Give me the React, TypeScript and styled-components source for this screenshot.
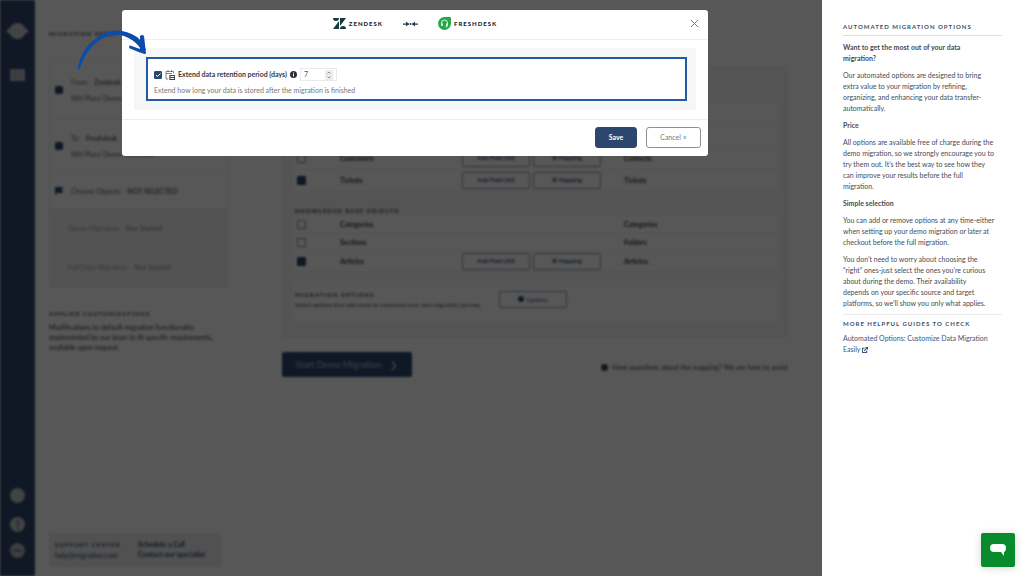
import React from 'react';
import styled, { createGlobalStyle } from 'styled-components';

const GlobalStyle = createGlobalStyle`
  *, *::before, *::after { box-sizing: border-box; }
  body { margin: 0; background: #fff; color: #454c55; font: 7px/11px Lato, "Liberation Sans", sans-serif; }
  h1, h2, h3, p { margin: 0; }
  button, input { font: inherit; }
`;

const Page = styled.div`
  display: grid;
  grid-template-columns: minmax(0, 1fr) 202px;
  min-height: 100vh;
`;

/* ---------- application behind the dialog ---------- */

const Stage = styled.div`
  position: relative;
  overflow: hidden;
`;

const Backdrop = styled.div`
  display: flex;
  min-height: 100%;
  background: #fff;
  filter: blur(1px);
`;

const Shade = styled.div`
  position: absolute;
  inset: 0;
  background: rgba(0, 0, 0, 0.66);
`;

const Rail = styled.nav`
  display: flex;
  flex-direction: column;
  align-items: center;
  width: 35px;
  flex: none;
  padding: 22px 0 18px;
  background: #30486f;
`;

const RailGap = styled.div<{ $size?: number }>`
  flex: ${(p) => (p.$size ? `0 0 ${p.$size}px` : '1')};
`;

const Steps = styled.section`
  display: flex;
  flex-direction: column;
  width: 193px;
  flex: none;
  padding: 28px 0 9px 14px;
`;

const Caption = styled.h2`
  font-size: 6px;
  line-height: 11px;
  font-weight: 700;
  letter-spacing: 1px;
  text-transform: uppercase;
  color: #3c4654;
`;

const StepList = styled.div`
  margin-top: 21px;
  border: 1px solid #eceef0;
`;

const Step = styled.div<{ $height: number; $muted?: boolean }>`
  display: flex;
  align-items: center;
  gap: 8px;
  height: ${(p) => p.$height}px;
  padding-left: ${(p) => (p.$muted ? 18 : 5)}px;
  border-bottom: 1px solid #eceef0;
  background: ${(p) => (p.$muted ? '#f4f4f4' : '#fff')};
  color: ${(p) => (p.$muted ? '#a0a0a0' : '#5a6472')};
  font-size: 7px;
  line-height: 16px;
  white-space: nowrap;

  b { margin-left: 4px; }
`;

const Customizations = styled.div`
  margin-top: 20px;
  font-size: 7px;
  line-height: 10px;
  color: #3a3a3a;
  white-space: nowrap;

  p { margin-top: 3px; }
`;

const SupportBox = styled.div`
  display: grid;
  grid-template-columns: 71px auto;
  gap: 12px;
  height: 34px;
  margin: auto 7px 0 0;
  padding: 6px;
  background: #ececec;
  font-size: 7px;
  line-height: 10px;
  color: #2d466e;
  white-space: nowrap;
`;

const Workspace = styled.section`
  flex: 1;
  min-width: 0;
  padding: 66px 34px 0 54px;
`;

const Mapping = styled.div`
  padding: 37px 8px 14px 10px;
  border: 1px solid #eee;
  background: #f5f5f5;
`;

const ObjectTable = styled.table`
  width: 100%;
  border-collapse: collapse;
  table-layout: fixed;
  font-size: 7px;
  line-height: 10px;
  font-weight: 700;
  color: #333;

  td { padding: 0; border-bottom: 1px solid #f1f1f1; background: #fff; }
  td:first-child { padding-left: 4px; }
`;

const ObjectRow = styled.tr<{ $height: number }>`
  height: ${(p) => p.$height}px;
`;

const Tick = styled.input`
  display: block;
  appearance: none;
  width: 9px;
  height: 9px;
  margin: 0;
  border: 1px solid #76869f;
  border-radius: 1px;
  background: #fff;

  &:checked { background: #2d466e; border-color: #2d466e; }
`;

const RowButton = styled.button`
  display: inline-flex;
  align-items: center;
  justify-content: center;
  gap: 2px;
  width: 68px;
  height: 17px;
  margin-right: 3px;
  padding: 0;
  border: 1px solid #8391a9;
  border-radius: 2px;
  background: #fff;
  color: #2d466e;
  font-size: 6px;
  vertical-align: middle;
`;

const GroupCaption = styled(Caption)`
  padding: 13px 2px 0;
`;

const OptionsCard = styled.div`
  display: flex;
  align-items: center;
  justify-content: space-between;
  width: 100%;
  height: 41px;
  margin-top: 9px;
  padding: 0 209px 5px 2px;
  background: #fff;
  font-size: 6px;
  line-height: 9px;
  white-space: nowrap;
`;

const Actions = styled.div`
  display: flex;
  align-items: center;
  justify-content: space-between;
  margin-top: 15px;
  font-size: 7px;
  color: #2d466e;
`;

const StartButton = styled.button`
  display: flex;
  align-items: center;
  justify-content: center;
  gap: 9px;
  width: 130px;
  height: 25px;
  padding: 0;
  border: 0;
  border-radius: 2px;
  background: #2d466e;
  color: #b9c3d3;
  font-size: 9px;
  white-space: nowrap;
`;

const Inquiry = styled.span`
  display: flex;
  align-items: center;
  gap: 4px;
  padding-top: 6px;
`;

/* ---------- dialog ---------- */

const Dialog = styled.section`
  position: absolute;
  top: 10px;
  left: 122px;
  right: 114px;
  border-radius: 3px;
  background: #fff;
`;

const DialogHeader = styled.header`
  display: grid;
  grid-template-columns: 1fr auto 1fr;
  align-items: center;
  height: 30px;
  padding: 0 9px 2px;
  border-bottom: 1px solid #eceef0;
`;

const Route = styled.div`
  display: flex;
  align-items: center;
  grid-column: 2;
  gap: 20px;
`;

const Brand = styled.span`
  display: flex;
  align-items: center;
  gap: 3px;
  color: #20242a;
  font-size: 6px;
  font-weight: 900;
  letter-spacing: 1px;
`;

const CloseButton = styled.button`
  display: flex;
  justify-self: end;
  padding: 0;
  border: 0;
  background: none;
  color: #777;
`;

const DialogBody = styled.div`
  padding: 8px 12px 9px;
`;

const Well = styled.div`
  padding: 9px;
  padding-left: 12px;
  background: #f5f6f6;
`;

const OptionBox = styled.div`
  height: 44px;
  padding: 9px 6px 0;
  border: 2px solid #2459a3;
  background: #fff;
`;

const OptionLine = styled.div`
  display: flex;
  align-items: center;
  gap: 3px;
  height: 13px;
`;

const OptionLabel = styled.label`
  color: #333b45;
  font-size: 7px;
  font-weight: 700;
`;

const OptionTick = styled.span`
  display: grid;
  width: 8px;
  height: 8px;

  > * { grid-area: 1 / 1; }
  input { width: 8px; height: 8px; }
  svg { pointer-events: none; z-index: 1; }
`;

const DaysField = styled.span`
  display: flex;
  align-items: center;
  justify-content: space-between;
  width: 37px;
  height: 13px;
  padding: 0 3px;
  border: 1px solid #e7e9ec;

  input {
    width: 20px;
    padding: 0;
    border: 0;
    outline: 0;
    background: none;
    color: #555;
    font-size: 7px;
    line-height: 11px;
    appearance: textfield;
  }
  input::-webkit-inner-spin-button { appearance: none; }
`;

const OptionHint = styled.p`
  margin-top: 4px;
  color: #777;
  font-size: 7px;
`;

const DialogFooter = styled.footer`
  display: flex;
  justify-content: flex-end;
  gap: 9px;
  padding: 7px 7px 8px;
  border-top: 1px solid #eceef0;
`;

const FooterButton = styled.button<{ $primary?: boolean }>`
  width: ${(p) => (p.$primary ? 42 : 55)}px;
  height: 21px;
  padding: 0;
  border: 1px solid ${(p) => (p.$primary ? '#2d466e' : '#909090')};
  border-radius: 3px;
  background: ${(p) => (p.$primary ? '#2d466e' : '#fff')};
  color: ${(p) => (p.$primary ? '#fff' : '#7b7b7b')};
  font-size: 7px;
  font-weight: ${(p) => (p.$primary ? 700 : 400)};
`;

const Pointer = styled.svg`
  position: absolute;
  left: 74px;
  top: 24px;
`;

/* ---------- help column ---------- */

const Help = styled.aside`
  padding: 21px 22px 0 21px;
  background: #fff;
`;

const HelpTitle = styled(Caption)`
  color: #3c5068;
  white-space: nowrap;
`;

const HelpBody = styled.div`
  margin: 3px 0;
  padding: 6px 0 5px;
  border-top: 1px solid #dde0e3;
  border-bottom: 1px solid #e8eaec;
`;

const HelpHeading = styled.h3`
  font-size: 7px;
  line-height: 11px;
  font-weight: 700;
  margin-bottom: 6px;
`;

const HelpText = styled.p`
  margin-bottom: 6px;
  white-space: nowrap;

  &:last-child { margin-bottom: 0; }
`;

const HelpLink = styled.a`
  display: block;
  margin-top: 4px;
  color: #3b5579;
  text-decoration: none;
  white-space: nowrap;

  svg { vertical-align: -1px; }
`;

const ChatButton = styled.button`
  position: fixed;
  right: 9px;
  bottom: 9px;
  display: grid;
  place-items: center;
  width: 34px;
  height: 34px;
  padding: 0;
  border: 0;
  border-radius: 2px;
  background: #078b2d;
  box-shadow: 0 1px 8px rgba(0, 0, 0, 0.16);
`;

const Dot = ({ size = 7, color = '#2d466e' }: { size?: number; color?: string }) => (
  <svg width={size} height={size} viewBox="0 0 10 10"><circle cx="5" cy="5" r="5" fill={color} /></svg>
);

const ConnectorIcon = () => (
  <svg width="8" height="8" viewBox="0 0 8 8"><rect width="8" height="8" rx="2" fill="#2d466e" /></svg>
);

const FlagIcon = () => (
  <svg width="8" height="8" viewBox="0 0 8 8"><path d="M0 0h8L7 3l1 3H1v2H0z" fill="#2d466e" /></svg>
);

const ZendeskIcon = () => (
  <svg width="13" height="11" viewBox="0 0 26 22">
    <path fill="#17393d" d="M12 6v16H0zM0 0h12a6 6 0 0 1-12 0zM14 22a6 6 0 0 1 12 0zM14 16V0h12z" />
  </svg>
);

const FreshdeskIcon = () => (
  <svg width="13" height="13" viewBox="0 0 26 26">
    <path fill="#25a74b" d="M13 0h11a2 2 0 0 1 2 2v11A13 13 0 1 1 13 0z" />
    <path fill="none" stroke="#d8f3df" strokeWidth="2" d="M7 15v-3a6 6 0 0 1 12 0v5q0 3-4 3" />
    <path fill="#d8f3df" d="M6 13h4v5H8q-2 0-2-2zM16 13h4v3q0 2-2 2h-2z" />
  </svg>
);

const TransferIcon = () => (
  <svg width="15" height="6" viewBox="0 0 30 12">
    <path stroke="#26394f" strokeWidth="2.500" d="M0 6h12M18 6h12" />
    <path fill="#26394f" d="M6 1l6 5-6 5zM24 1l-6 5 6 5z" />
    <circle cx="15" cy="6" r="2" fill="#26394f" />
  </svg>
);

const CalendarIcon = () => (
  <svg width="10" height="10" viewBox="0 0 20 20" fill="none" stroke="#666" strokeWidth="1.600">
    <path d="M6 18H2V3h15v4M2 7h12M6 0v4M13 0v4" />
    <path stroke="#444" strokeWidth="2" d="M9 11h11M9 15h11M9 19h11M10 10v10M19 10v10" />
  </svg>
);

const InfoIcon = () => (
  <svg width="7" height="7" viewBox="0 0 14 14">
    <circle cx="7" cy="7" r="7" fill="#2c3036" />
    <path fill="#fff" d="M6 3h2v2H6zM6 6h2v5H6z" />
  </svg>
);

const Spinner = () => (
  <svg width="8" height="10" viewBox="0 0 16 20">
    <path fill="#ececec" d="M0 0h16v20H0z" />
    <path fill="none" stroke="#777" strokeWidth="1.500" d="M5 7l3-3 3 3M5 13l3 3 3-3" />
  </svg>
);

type Mapped = { source: string; target: string; height: number; editable?: boolean; on?: boolean };

const Rows = ({ rows, label }: { rows: Mapped[]; label: string }) => (
  <ObjectTable aria-label={label}>
    <colgroup><col width="47" /><col width="122" /><col width="162" /><col /></colgroup>
    <tbody>
      {rows.map((row) => (
        <ObjectRow key={row.source} $height={row.height}>
          <td><Tick type="checkbox" defaultChecked={row.on} aria-label={row.source} /></td>
          <td>{row.source}</td>
          <td>{row.editable && <><RowButton>Add Field (All)</RowButton><RowButton>⚙ Mapping</RowButton></>}</td>
          <td>{row.target}</td>
        </ObjectRow>
      ))}
    </tbody>
  </ObjectTable>
);

const helpdesk: Mapped[] = [
  { source: 'Agents', target: 'Agents', height: 21 },
  { source: 'Groups', target: 'Groups', height: 22 },
  { source: 'Customers', target: 'Contacts', height: 22, editable: true },
  { source: 'Tickets', target: 'Tickets', height: 22, editable: true, on: true },
];

const knowledge: Mapped[] = [
  { source: 'Categories', target: 'Categories', height: 18 },
  { source: 'Sections', target: 'Folders', height: 17 },
  { source: 'Articles', target: 'Articles', height: 21, editable: true, on: true },
];

const lines = (items: string[]) =>
  items.map((item, i) => <React.Fragment key={item}>{i > 0 && <br />}{item}</React.Fragment>);

export default function App() {
  return (
    <>
      <GlobalStyle />
      <Page>
        <Stage>
          <Backdrop aria-hidden="true">
            <Rail>
              <svg width="23" height="18" viewBox="0 0 23 18">
                <ellipse cx="11.500" cy="9" rx="8" ry="8" fill="#c4c7cb" />
                <path d="M0 9l5-4h13l5 4-5 4H5z" fill="#c4c7cb" />
              </svg>
              <RailGap $size={29} />
              <svg width="15" height="12" viewBox="0 0 15 12">
                <rect width="15" height="12" rx="1" fill="#b5bac2" />
                <path d="M3 4h4M9 4h3M3 7h4M9 7h3" stroke="#8d97a7" />
              </svg>
              <RailGap />
              <Dot size={15} color="#c0c3c8" />
              <RailGap $size={14} />
              <svg width="15" height="15" viewBox="0 0 15 15">
                <circle cx="7.500" cy="7.500" r="7.500" fill="#c0c3c8" />
                <path d="M6 5q2-2 3 0 0 1-1 2v2M8 10v2" fill="none" stroke="#30486f" />
              </svg>
              <RailGap $size={11} />
              <svg width="15" height="15" viewBox="0 0 15 15">
                <circle cx="7.500" cy="7.500" r="7.500" fill="#b0b6bf" />
                <path d="M3 7.500h9" stroke="#30486f" />
              </svg>
            </Rail>

            <Steps>
              <Caption>Migration setup</Caption>
              <StepList>
                <Step $height={58}><ConnectorIcon /><span>From: <b>Zendesk</b><br />MH Place Demo Zendesk</span></Step>
                <Step $height={54}><ConnectorIcon /><span>To: <b>Freshdesk</b><br />MH Place Demo Freshdesk</span></Step>
                <Step $height={36}><FlagIcon /><span>Choose Objects: <b>NOT SELECTED</b></span></Step>
                <Step $height={38} $muted><span>Demo Migration: <b>Not Started</b></span></Step>
                <Step $height={40} $muted><span>Full Data Migration: <b>Not Started</b></span></Step>
              </StepList>
              <Customizations>
                <Caption>Applied customizations</Caption>
                <p>{lines(['Modifications to default migration functionality', 'implemented by our team to fit specific requirements,', 'available upon request.'])}</p>
              </Customizations>
              <SupportBox>
                <div><Caption>Support center</Caption>help@migration.com</div>
                <div><b>Schedule a Call</b><br /><b>Contact our specialist</b></div>
              </SupportBox>
            </Steps>

            <Workspace>
              <Mapping>
                <Rows rows={helpdesk} label="Help desk objects" />
                <GroupCaption>Knowledge base objects</GroupCaption>
                <Rows rows={knowledge} label="Knowledge base objects" />
                <OptionsCard>
                  <div>
                    <Caption>Migration options</Caption>
                    Select options that add more to customize your data migration journey
                  </div>
                  <RowButton><Dot size={6} /> Options</RowButton>
                </OptionsCard>
              </Mapping>
              <Actions>
                <StartButton>Start Demo Migration <span>❯</span></StartButton>
                <Inquiry><Dot /> Have questions about the mapping? We are here to assist</Inquiry>
              </Actions>
            </Workspace>
          </Backdrop>
          <Shade />

          <Dialog role="dialog" aria-label="Migration options">
            <DialogHeader>
              <Route>
                <Brand><ZendeskIcon />ZENDESK</Brand>
                <TransferIcon />
                <Brand><FreshdeskIcon />FRESHDESK</Brand>
              </Route>
              <CloseButton aria-label="Close">
                <svg width="9" height="9" viewBox="0 0 9 9" stroke="currentColor"><path d="M1 1l7 7M8 1L1 8" /></svg>
              </CloseButton>
            </DialogHeader>
            <DialogBody>
              <Well>
                <OptionBox>
                  <OptionLine>
                    <OptionTick>
                      <Tick id="retention" type="checkbox" defaultChecked />
                      <svg width="8" height="8" viewBox="0 0 8 8" fill="none" stroke="#fff"><path d="M2 4l1.500 1.500L6.500 2.500" /></svg>
                    </OptionTick>
                    <CalendarIcon />
                    <OptionLabel htmlFor="retention">Extend data retention period (days)</OptionLabel>
                    <InfoIcon />
                    <DaysField>
                      <input type="number" defaultValue={7} aria-label="Retention days" />
                      <Spinner />
                    </DaysField>
                  </OptionLine>
                  <OptionHint>Extend how long your data is stored after the migration is finished</OptionHint>
                </OptionBox>
              </Well>
            </DialogBody>
            <DialogFooter>
              <FooterButton $primary>Save</FooterButton>
              <FooterButton>Cancel ×</FooterButton>
            </DialogFooter>
          </Dialog>

          <Pointer width="76" height="48" viewBox="0 0 76 48" fill="#0b4cab" aria-hidden="true">
            <path d="M3.500 45Q7 24 24 13 43 0 63 13q6 5 9 13l-4 1Q64 20 58 16 43 6 27 15 11 26 6 44q-1 2-2.500 1z" />
            <path d="M56 24.500q-2-2 0-3L66 25 66 12q2-2 4 0L72 29.500 70.500 30Q64 28 56 24.500z" />
          </Pointer>
        </Stage>

        <Help>
          <HelpTitle>Automated migration options</HelpTitle>
          <HelpBody>
            <HelpHeading>{lines(['Want to get the most out of your data', 'migration?'])}</HelpHeading>
            <HelpText>{lines(['Our automated options are designed to bring', 'extra value to your migration by refining,', 'organizing, and enhancing your data transfer-', 'automatically.'])}</HelpText>
            <HelpHeading>Price</HelpHeading>
            <HelpText>{lines(['All options are available free of charge during the', 'demo migration, so we strongly encourage you to', 'try them out. It’s the best way to see how they', 'can improve your results before the full', 'migration.'])}</HelpText>
            <HelpHeading>Simple selection</HelpHeading>
            <HelpText>{lines(['You can add or remove options at any time-either', 'when setting up your demo migration or later at', 'checkout before the full migration.'])}</HelpText>
            <HelpText>{lines(['You don’t need to worry about choosing the', '“right” ones-just select the ones you’re curious', 'about during the demo. Their availability', 'depends on your specific source and target', 'platforms, so we’ll show you only what applies.'])}</HelpText>
          </HelpBody>
          <HelpTitle>More helpful guides to check</HelpTitle>
          <HelpLink href="#guide">
            Automated Options: Customize Data Migration<br />Easily{' '}
            <svg width="6" height="6" viewBox="0 0 14 14" fill="none" stroke="currentColor" strokeWidth="2.500">
              <path d="M6 3H1v10h10V8M8 1h5v5M13 1L5 9" />
            </svg>
          </HelpLink>
        </Help>
      </Page>

      <ChatButton aria-label="Open chat">
        <svg width="16" height="12" viewBox="0 0 16 12">
          <path fill="#fff" d="M4 0h8a4 4 0 0 1 4 4q0 3-2 4v4l-3-4H4a4 4 0 0 1 0-8z" />
        </svg>
      </ChatButton>
    </>
  );
}
